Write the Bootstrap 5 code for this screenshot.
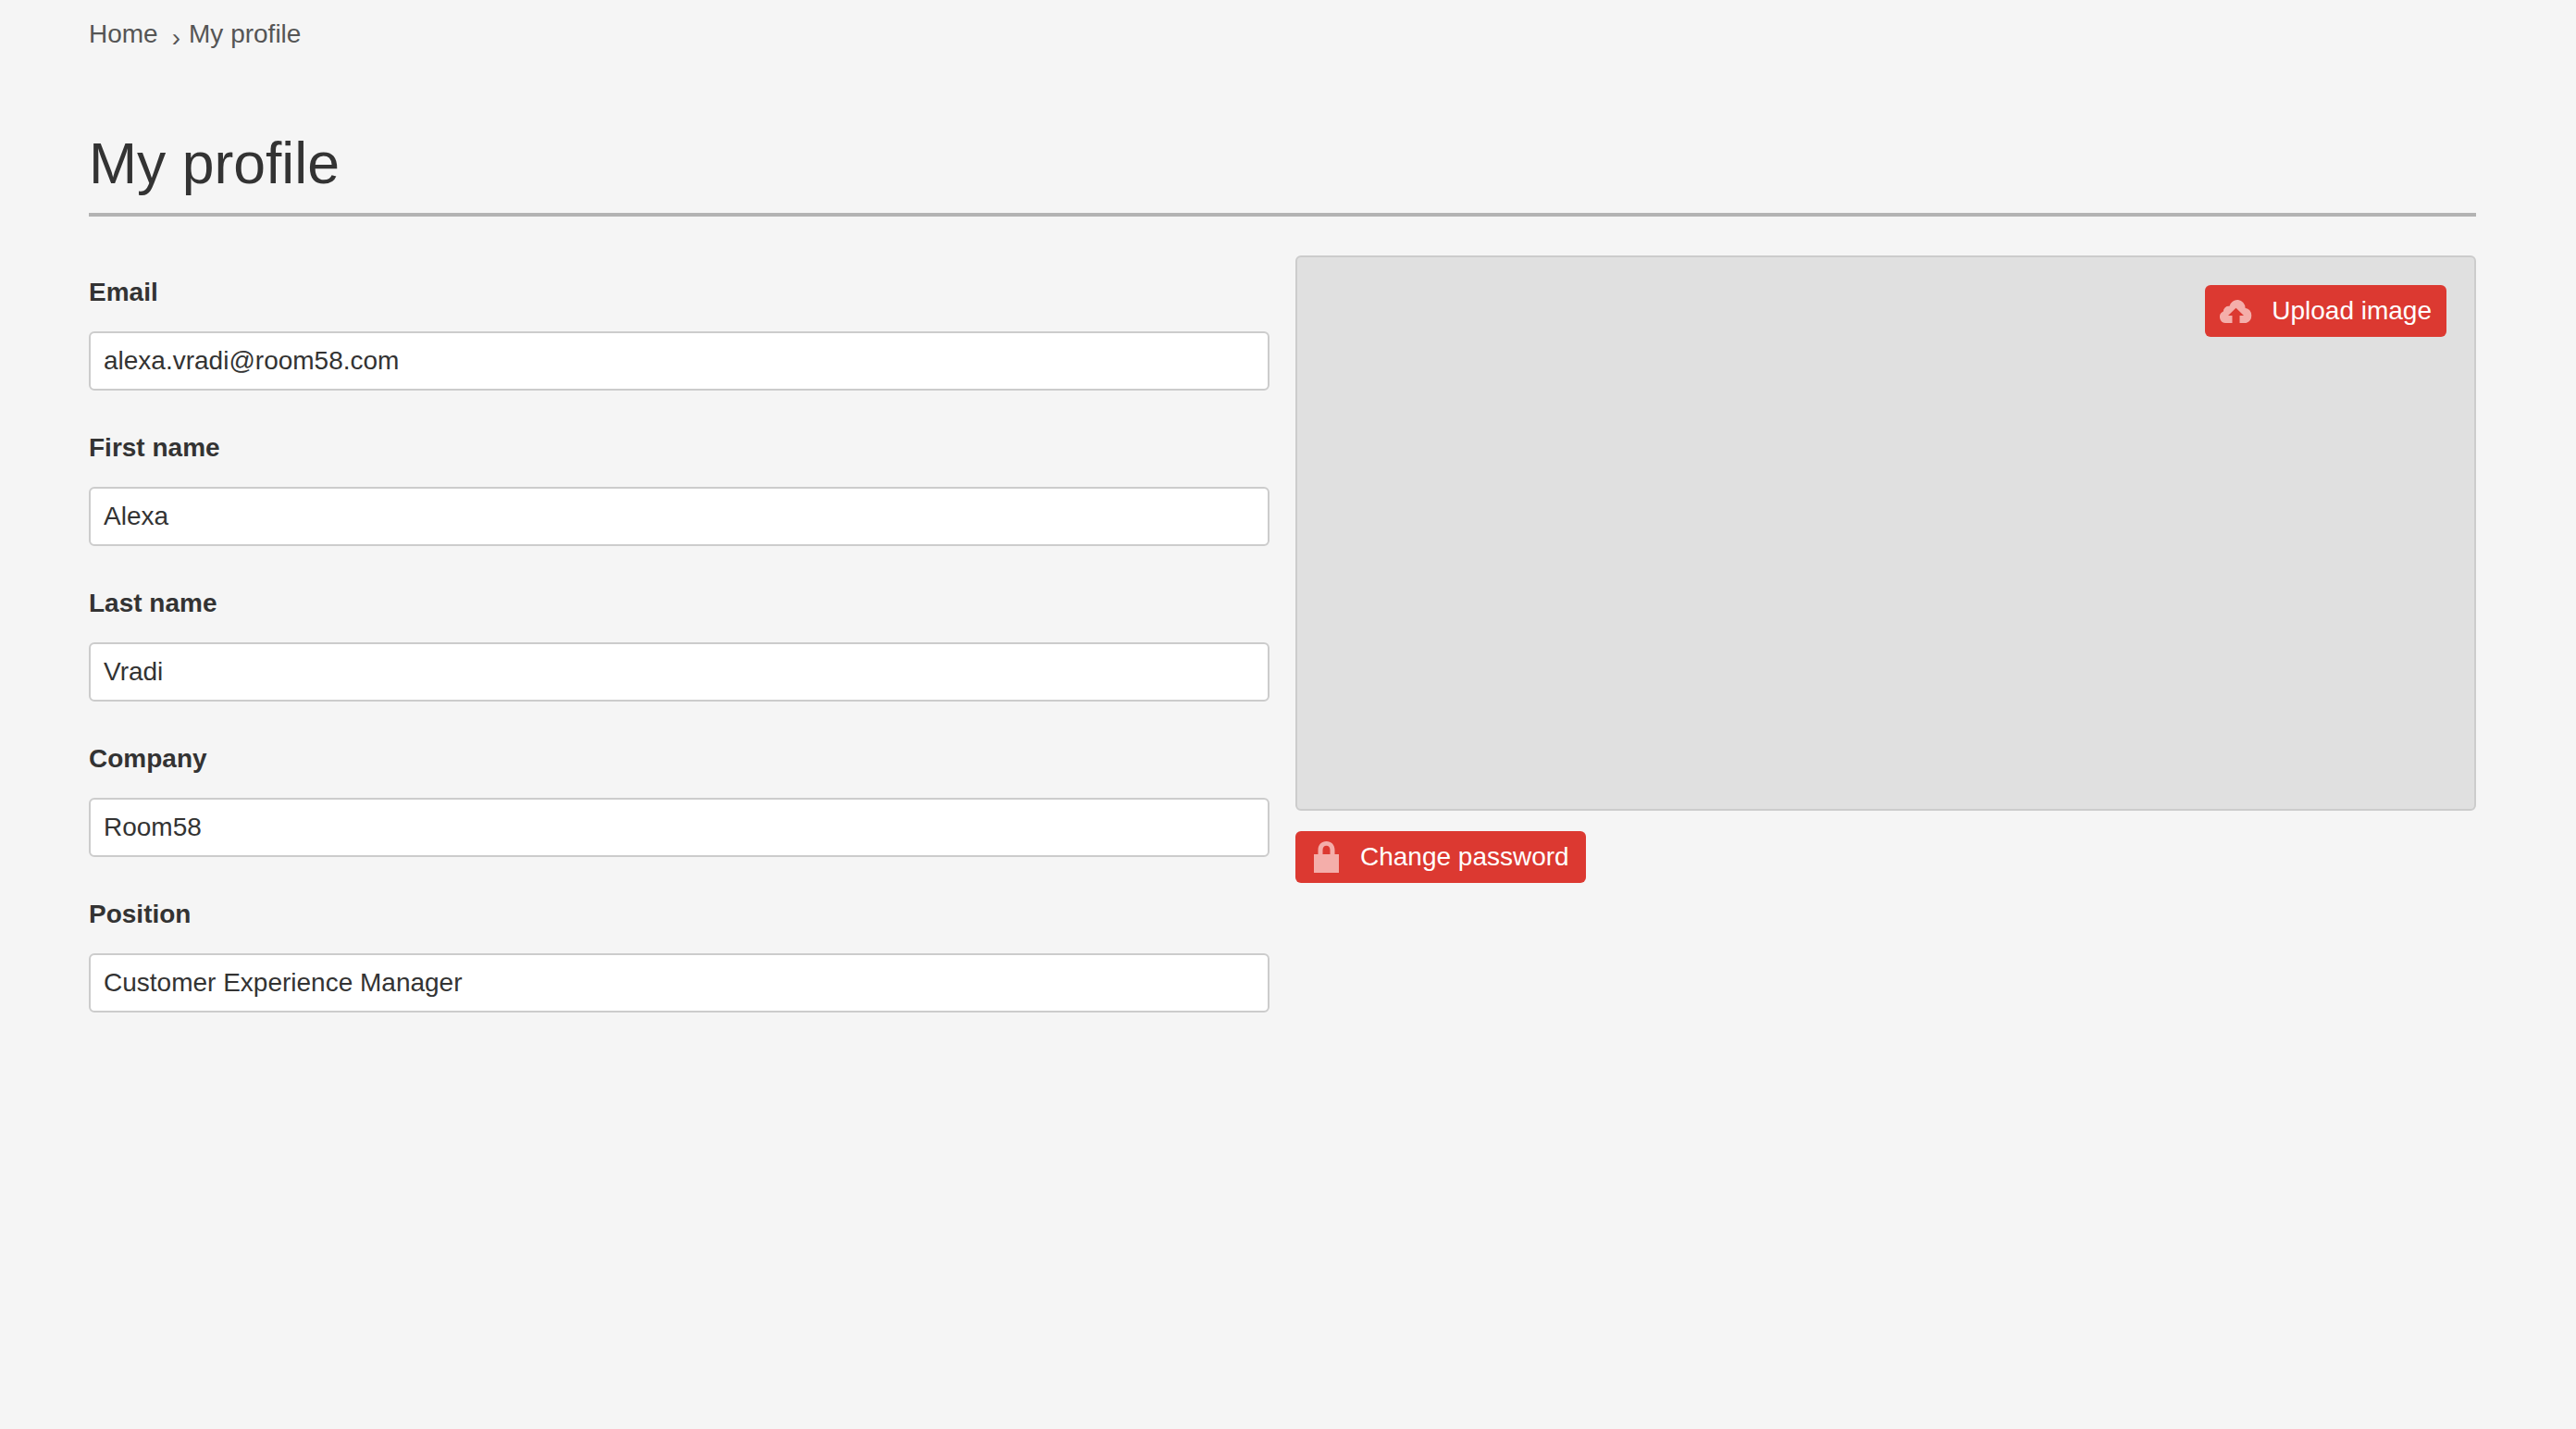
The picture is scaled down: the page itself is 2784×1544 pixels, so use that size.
<!DOCTYPE html>
<html lang="en">
<head>
    <meta charset="UTF-8">
    <meta name="viewport" content="width=device-width, initial-scale=1.0">
    <title>My profile</title>

    <link rel="stylesheet" href="https://cdn.jsdelivr.net/npm/bootstrap@5.3.0/dist/css/bootstrap.min.css">
    <style>
        body {
            background-color: #f5f5f5;
            color: #333;
            font-family: "Liberation Sans", Arial, sans-serif;
            font-size: 28px;
        }

        .page-wrap {
            padding: 21px 108px 0 96px;
        }

        /* breadcrumb */
        .crumbs {
            --bs-breadcrumb-margin-bottom: 0;
            --bs-breadcrumb-divider-color: #555;
            --bs-breadcrumb-item-active-color: #555;
            --bs-breadcrumb-font-size: 28px;
            line-height: 32px;
        }
        .crumbs a {
            color: #555;
            text-decoration: none;
        }
        .crumbs .breadcrumb-item + .breadcrumb-item {
            padding-left: 15px;
        }
        .crumbs .breadcrumb-item + .breadcrumb-item::before {
            padding-right: 9px;
            position: relative;
            top: 4px;
        }

        /* heading */
        .page-title {
            margin: 87px 0 0;
            padding-bottom: 18px;
            border-bottom: 4px solid #b3b3b3;
            font-size: 62.5px;
            font-weight: 400;
            line-height: 72px;
            color: #333;
        }

        .profile-row {
            --bs-gutter-x: 28px;
            margin-top: 42px;
        }

        /* form */
        .profile-form {
            padding-top: 19px;
        }
        .field-group {
            margin-bottom: 41px;
        }
        .field-group label {
            display: block;
            margin: 0 0 21px;
            font-weight: 700;
            line-height: 42px;
            color: #333;
        }
        .field-group .form-control {
            height: 64px;
            padding: 0 14px;
            border: 2px solid #ccc;
            border-radius: 6px;
            font-size: 28px;
            color: #333;
        }

        /* image panel */
        .image-panel {
            height: 600px;
            padding: 30px 30px;
            background-color: #e0e0e0;
            border: 2px solid #ccc;
            border-radius: 6px;
        }

        .btn-red {
            --bs-btn-color: #fff;
            --bs-btn-bg: #dc3931;
            --bs-btn-border-color: #dc3931;
            --bs-btn-hover-color: #fff;
            --bs-btn-hover-bg: #c9302a;
            --bs-btn-hover-border-color: #c9302a;
            --bs-btn-font-size: 28px;
            --bs-btn-border-radius: 6px;
            --bs-btn-border-width: 0;
            --bs-btn-padding-y: 0;
            height: 56px;
            line-height: 56px;
        }
        .btn-upload {
            --bs-btn-padding-x: 16px;
            gap: 20px;
        }
        .btn-password {
            padding-left: 20px;
            padding-right: 18px;
            gap: 23px;
            margin-top: 22px;
        }
    </style>
</head>
<body>
    <div class="page-wrap">
        <nav aria-label="breadcrumb">
            <ol class="breadcrumb crumbs" style="--bs-breadcrumb-divider: '›';">
                <li class="breadcrumb-item"><a href="#">Home</a></li>
                <li class="breadcrumb-item active" aria-current="page">My profile</li>
            </ol>
        </nav>

        <h1 class="page-title">My profile</h1>

        <div class="row profile-row">
            <div class="col-6">
                <form class="profile-form">
                    <div class="field-group">
                        <label for="email">Email</label>
                        <input type="text" id="email" class="form-control" value="alexa.vradi@room58.com">
                    </div>
                    <div class="field-group">
                        <label for="first-name">First name</label>
                        <input type="text" id="first-name" class="form-control" value="Alexa">
                    </div>
                    <div class="field-group">
                        <label for="last-name">Last name</label>
                        <input type="text" id="last-name" class="form-control" value="Vradi">
                    </div>
                    <div class="field-group">
                        <label for="company">Company</label>
                        <input type="text" id="company" class="form-control" value="Room58">
                    </div>
                    <div class="field-group">
                        <label for="position">Position</label>
                        <input type="text" id="position" class="form-control" value="Customer Experience Manager">
                    </div>
                </form>
            </div>
            <div class="col-6">
                <div class="image-panel d-flex justify-content-end align-items-start">
                    <button type="button" class="btn btn-red btn-upload d-inline-flex align-items-center">
                        <svg width="36" height="25" viewBox="0 0 36 25" aria-hidden="true">
                            <path fill="#f4aeaa" d="M6.500 25A6.500 6.500 0 0 1 3.800 12.600 5.800 5.800 0 0 1 10.500 6.800 8.600 8.600 0 0 1 27.500 8.800 8.400 8.400 0 0 1 28.500 25H21.500V17H26L17.500 8.700 9 17H13.500V25Z"/>
                        </svg>
                        Upload image
                    </button>
                </div>
                <button type="button" class="btn btn-red btn-password d-inline-flex align-items-center">
                    <svg width="27" height="34" viewBox="0 0 27 34" aria-hidden="true">
                        <path fill="#f4aeaa" fill-rule="evenodd" d="M0 14H4.500V9.500C4.500 3.800 8.300 0 13.500 0S22.500 3.800 22.500 9.500V14H27V34H0ZM9.500 14H17.500V9.500C17.500 6.500 16 4.800 13.500 4.800S9.500 6.500 9.500 9.500Z"/>
                    </svg>
                    Change password
                </button>
            </div>
        </div>
    </div>

    <script src="https://cdn.jsdelivr.net/npm/bootstrap@5.3.0/dist/js/bootstrap.bundle.min.js"></script>
</body>
</html>
